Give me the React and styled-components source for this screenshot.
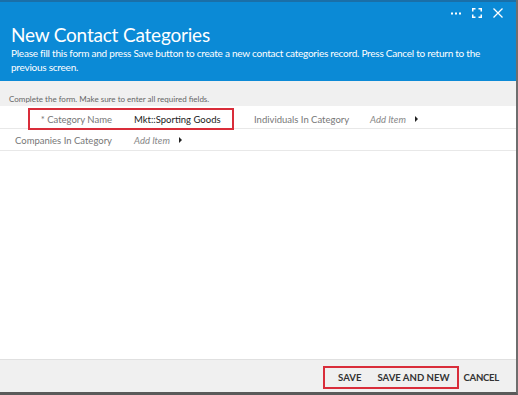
import React from 'react';
import styled, { createGlobalStyle } from 'styled-components';

const GlobalStyle = createGlobalStyle`
	html, body {
		margin: 0;
		padding: 0;
		background: #ffffff;
	}
	body {
		font-family: "Lato", "Open Sans", sans-serif;
	}
`;

const Window = styled.div`
	width: 518px;
	height: 395px;
	display: flex;
	flex-direction: column;
	box-sizing: border-box;
	border-right: 2px solid #6e6e6e;
	border-bottom: 3px solid #5a5a5a;
	overflow: hidden;
`;

const Header = styled.header`
	background: #0b8ad6;
	border-top: 2px solid #1a6fa8;
	color: #ffffff;
	padding: 0 13px 0 11px;
	height: 81px;
	box-sizing: border-box;
	display: flex;
	flex-direction: column;
`;

const TopBar = styled.div`
	display: flex;
	justify-content: flex-end;
	align-items: center;
	gap: 11px;
	height: 22px;
`;

const IconButton = styled.span`
	display: flex;
	align-items: center;
	justify-content: center;
	width: 10px;
	height: 10px;
`;

const Title = styled.h1`
	margin: 0;
	font-size: 19px;
	font-weight: 400;
	line-height: 22px;
	letter-spacing: -0.2px;
`;

const Subtitle = styled.p`
	margin: 0;
	font-size: 10px;
	line-height: 14px;
	letter-spacing: -0.24px;
	white-space: nowrap;
`;

const Notice = styled.div`
	background: #f0f0f0;
	color: #666666;
	font-size: 8px;
	line-height: 10px;
	height: 25px;
	padding: 13px 0 0 9px;
	box-sizing: border-box;
	flex-shrink: 0;
`;

const Form = styled.div`
	flex: 1;
	background: #ffffff;
	display: flex;
	flex-direction: column;
`;

const Row = styled.div`
	display: flex;
	align-items: center;
	height: ${p => p.$height}px;
	padding-top: ${p => p.$top || 0}px;
	border-bottom: 1px solid #e8e8e8;
	font-size: 9.5px;
	color: #777777;
`;

const Highlight = styled.div`
	display: flex;
	align-items: center;
	margin-left: 28px;
	width: 206px;
	height: 22px;
	box-sizing: border-box;
	border: 2px solid #d92d3a;
	flex-shrink: 0;
`;

const Label = styled.span`
	width: ${p => p.$width}px;
	margin-left: ${p => p.$left || 0}px;
	text-align: ${p => p.$align || 'left'};
	flex-shrink: 0;
`;

const Value = styled.span`
	color: #222222;
	margin-left: ${p => p.$left || 0}px;
`;

const AddItem = styled.span`
	display: flex;
	align-items: center;
	font-style: italic;
	color: #888888;
	margin-left: ${p => p.$left || 0}px;
	gap: 9px;
`;

const Arrow = styled.span`
	width: 0;
	height: 0;
	border-top: 3.5px solid transparent;
	border-bottom: 3.5px solid transparent;
	border-left: 3.5px solid #222222;
`;

const Footer = styled.footer`
	background: #f0f0f0;
	border-top: 1px solid #e0e0e0;
	height: 33px;
	display: flex;
	justify-content: flex-end;
	align-items: flex-start;
	padding: 6px 17px 0 0;
	box-sizing: border-box;
	flex-shrink: 0;
`;

const ButtonGroup = styled.div`
	display: flex;
	align-items: center;
	border: 2px solid #d92d3a;
	height: 23px;
	box-sizing: border-box;
	padding: 0 7px 0 13px;
	gap: 16px;
`;

const Button = styled.button`
	background: none;
	border: none;
	padding: 0;
	height: 23px;
	font-family: "Lato", "Open Sans", sans-serif;
	font-size: 9.6px;
	font-weight: 700;
	color: #333333;
	margin-left: ${p => p.$left || 0}px;
	letter-spacing: ${p => p.$tight ? '-0.3px' : '0'};
	cursor: pointer;
`;

const Dots = () => (
	<svg width="10" height="3" viewBox="0 0 10 3" fill="#fff">
		<rect x="0" y="0.5" width="2" height="2" />
		<rect x="4" y="0.5" width="2" height="2" />
		<rect x="8" y="0.5" width="2" height="2" />
	</svg>
);

const Expand = () => (
	<svg width="10" height="10" viewBox="0 0 10 10" fill="none" stroke="#fff" strokeWidth="1.5">
		<path d="M0.75 3.5V0.75h2.75M6.5 0.75h2.75v2.75M9.25 6.5v2.75H6.5M3.5 9.25H0.75V6.5" />
	</svg>
);

const Close = () => (
	<svg width="10" height="10" viewBox="0 0 10 10" stroke="#fff" strokeWidth="1.3">
		<path d="M0.5 0.5l9 9M9.5 0.5l-9 9" />
	</svg>
);

const App = () => (
	<>
		<GlobalStyle />
		<Window>
			<Header>
				<TopBar>
					<IconButton><Dots /></IconButton>
					<IconButton><Expand /></IconButton>
					<IconButton><Close /></IconButton>
				</TopBar>
				<Title>New Contact Categories</Title>
				<Subtitle>
					Please fill this form and press Save button to create a new contact categories record. Press Cancel to return to the
					<br />
					previous screen.
				</Subtitle>
			</Header>
			<Notice>Complete the form. Make sure to enter all required fields.</Notice>
			<Form>
				<Row $height={18} $top={4}>
					<Highlight>
						<Label $width={82} $align="right">* Category Name</Label>
						<Value $left={22}>Mkt::Sporting Goods</Value>
					</Highlight>
					<Label $width={116} $left={20}>Individuals In Category</Label>
					<AddItem>Add Item <Arrow /></AddItem>
				</Row>
				<Row $height={20} $top={1}>
					<Label $width={97} $left={15} $align="right">Companies In Category</Label>
					<AddItem $left={22}>Add Item <Arrow /></AddItem>
				</Row>
			</Form>
			<Footer>
				<ButtonGroup>
					<Button>SAVE</Button>
					<Button>SAVE AND NEW</Button>
				</ButtonGroup>
				<Button $left={5} $tight>CANCEL</Button>
			</Footer>
		</Window>
	</>
);

export default App;
